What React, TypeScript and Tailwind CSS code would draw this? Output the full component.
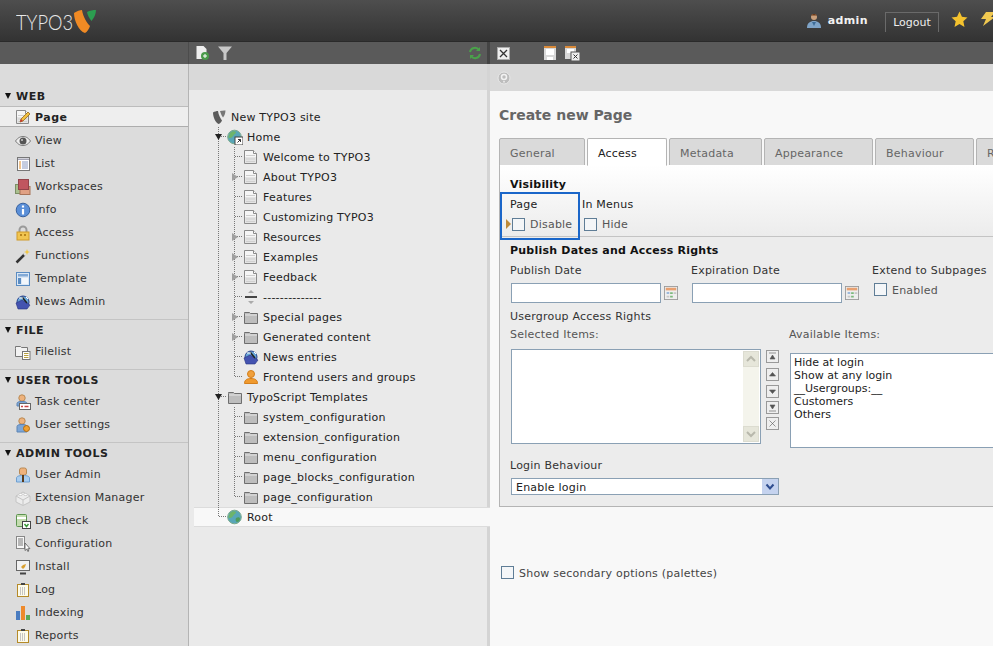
import React from 'react';

const Svg: React.FC<{ size?: number; children: React.ReactNode }> = ({ size = 16, children }) => (
  <svg viewBox="0 0 16 16" width={size} height={size} className="shrink-0">
    {children}
  </svg>
);

const PageShape = () => (
  <>
    <path d="M1.500 1.500h9l3 3v10h-12z" fill="#f6f6f6" stroke="#8a8a8a" />
    <path d="M10.500 1.500v3h3" fill="#fff" stroke="#8a8a8a" />
    <path d="M2 8h11v6H2z" fill="#e4e4e4" />
    <path d="M3 6.500h9M3 10h9M3 12.500h9" stroke="#cfcfcf" />
  </>
);
const FolderIcon = () => (
  <Svg>
    <path d="M1.500 4.500v-1h5l1 1h7v10h-13z" fill="#bdbdbd" stroke="#6e6e6e" />
    <path d="M2 6h12" stroke="#e6e6e6" />
  </Svg>
);
const GlobeIcon = ({ link }: { link?: boolean }) => (
  <Svg>
    <circle cx="7.500" cy="8" r="6.800" fill="#58a6b8" stroke="#7aa98a" />
    <path d="M3 4c2-2 5-2 6-1 0 2-2 2-3 4S3 9 2 9s0-3 1-5z" fill="#6db46a" />
    <path d="M9 9c2-1 4-1 4 1s-2 3-3 3-2-2-1-4z" fill="#4f9c5c" />
    {link && (
      <>
        <rect x="8" y="8" width="8" height="8" fill="#fff" stroke="#444" />
        <path d="M10.500 13.500l3-3M11 10.500h2.500V13" stroke="#333" fill="none" />
      </>
    )}
  </Svg>
);
const Typo3Mark = () => (
  <Svg>
    <path d="M2 3.500c1.500-1 3.500-1.500 5-1.500 .5 4 2.500 7.500 4 9.500C10 13.500 8.500 15 7.500 15 4.500 13.500 2 8 2 3.500z" fill="#5c5c5c" />
    <path d="M9 2c2-.5 4-.8 5.500-.5 0 2.500-1 5-2.500 7C10.500 6.500 9.500 4 9 2z" fill="#777" />
  </Svg>
);
const NewsIcon = () => (
  <Svg>
    <circle cx="8" cy="8" r="6" fill="#6aa8d8" stroke="#27408f" />
    <path d="M1 9l6-3 8 5-3 4H3z" fill="#4453b0" stroke="#27327f" strokeWidth=".6" />
    <path d="M7 3l5 6" stroke="#222" strokeWidth="1.500" />
    <path d="M4 4h4M11 3l2 2" stroke="#fff" />
  </Svg>
);
const UserOrange = () => (
  <Svg>
    <circle cx="8" cy="5" r="3.500" fill="#f0a03c" stroke="#d47f1c" />
    <path d="M1.500 14.500c0-4 3-5 6.500-5s6.500 1 6.500 5z" fill="#f09a2e" stroke="#d47f1c" />
  </Svg>
);
const Divider = () => (
  <Svg>
    <path d="M8 1l3 3H5zM8 15l3-3H5z" fill="#aaa" />
    <path d="M2 8h12" stroke="#444" strokeWidth="2" />
  </Svg>
);
const Clipboard = () => (
  <Svg>
    <rect x="2.500" y="2.500" width="11" height="12" fill="#fdfbea" stroke="#b58a28" />
    <rect x="6" y="1" width="4" height="2" fill="#444" />
    <path d="M5 6h6M5 8h6M5 10h6M5 12h6" stroke="#8f8f9f" strokeDasharray="1 1" />
  </Svg>
);

const sidebarIcons: Record<string, React.ReactNode> = {
  Page: (
    <Svg>
      <PageShape />
      <path d="M5 13l1-3 7-7 2 2-7 7z" fill="#f0c040" stroke="#8a5a10" strokeWidth=".7" />
      <path d="M5 13l1-3 2 2z" fill="#c33" />
    </Svg>
  ),
  View: (
    <Svg>
      <path d="M.5 8C3 4.500 5.500 3.500 8 3.500s5 1 7.500 4.500c-2.500 3.500-5 4.500-7.500 4.500S3 11.500.5 8z" fill="#eee" stroke="#777" />
      <circle cx="8" cy="8" r="3.500" fill="#555" />
      <circle cx="7" cy="7" r="1" fill="#ccc" />
    </Svg>
  ),
  List: (
    <Svg>
      <rect x="2.500" y="1.500" width="12" height="13" fill="#fff" stroke="#777" />
      <path d="M3 2.500h11v1.500H3z" fill="#a5a5b5" />
      <path d="M4 6h2M4 8h2M4 10h2M4 12h2" stroke="#e08a20" />
      <path d="M7 6h6M7 8h6M7 10h6M7 12h6" stroke="#8a9ac0" />
    </Svg>
  ),
  Workspaces: (
    <Svg>
      <rect x=".5" y="5.500" width="10" height="9" fill="#a9bf8e" stroke="#7c8f66" />
      <rect x="5" y="7.500" width="10" height="8" fill="#e0a184" stroke="#a87459" />
      <rect x="3.500" y=".5" width="10" height="10" fill="#c0565f" stroke="#93434a" />
    </Svg>
  ),
  Info: (
    <Svg>
      <circle cx="8" cy="8" r="6.800" fill="#5a8fd8" stroke="#38619e" />
      <path d="M8 3.500v2M8 7v5.500" stroke="#fff" strokeWidth="2.200" />
    </Svg>
  ),
  Access: (
    <Svg>
      <path d="M4.500 7V5a3.500 3.500 0 017 0v2" fill="none" stroke="#9a9a9a" strokeWidth="2" />
      <rect x="2" y="7" width="12" height="8" fill="#f1c550" stroke="#d09a28" />
      <path d="M5 10h2M9 10h2" stroke="#b9851d" strokeWidth="2" />
    </Svg>
  ),
  Functions: (
    <Svg>
      <path d="M1.500 14.500l8-8" stroke="#333" strokeWidth="2.500" />
      <path d="M9 7l1.500-1.500" stroke="#ddd" strokeWidth="2.500" />
      <path d="M12 1l.8 2.200L15 4l-2.200.8L12 7l-.8-2.200L9 4l2.200-.8z" fill="#f3c73e" />
    </Svg>
  ),
  Template: (
    <Svg>
      <rect x="1.500" y="1.500" width="13" height="13" fill="#dbe7f5" stroke="#5a8cc2" />
      <rect x="3" y="3" width="10" height="2.500" fill="#83aad6" />
      <rect x="3" y="7" width="3" height="6" fill="#5a8cc2" />
      <rect x="7" y="7" width="6" height="6" fill="#f3f7fb" />
    </Svg>
  ),
  'News Admin': <NewsIcon />,
  Filelist: (
    <Svg>
      <path d="M.5 4.500v-2h5l1 1h6v9H.5z" fill="#f2f2f2" stroke="#777" />
      <rect x="7.500" y="7.500" width="7.500" height="8" fill="#fff" stroke="#777" />
      <path d="M9 9.500h4.500M9 11.500h4.500M9 13.500h4.500" stroke="#b8a040" />
    </Svg>
  ),
  'Task center': (
    <Svg>
      <circle cx="7" cy="4" r="3.200" fill="#eeb27c" stroke="#b98a55" />
      <path d="M2 12V9.500c0-1.500 2-2 5-2s5 .5 5 2V12z" fill="#7da6d6" stroke="#5c84b4" />
      <rect x="4.500" y="9.500" width="11" height="6" fill="#fff" stroke="#666" />
      <path d="M6 12.500h2M9.500 12.500h4" stroke="#c44" strokeWidth="1.500" />
    </Svg>
  ),
  'User settings': (
    <Svg>
      <circle cx="7" cy="4" r="3.200" fill="#eeb27c" stroke="#b98a55" />
      <path d="M2 15V9.500c0-1.500 2-2 5-2s5 .5 5 2V15z" fill="#7da6d6" stroke="#5c84b4" />
      <circle cx="11.500" cy="11.500" r="3" fill="#f0a030" stroke="#b06a10" />
    </Svg>
  ),
  'User Admin': (
    <Svg>
      <rect x="4.500" y="1" width="7" height="7" rx="2" fill="#efb27c" stroke="#b98a55" />
      <path d="M1.500 15v-4c0-1.500 2-2.500 6.500-2.500s6.500 1 6.500 2.500v4z" fill="#a9cdef" stroke="#6f9fd0" />
      <path d="M8 8v7" stroke="#5a3a1a" strokeWidth="2" />
    </Svg>
  ),
  'Extension Manager': (
    <Svg>
      <path d="M1 6l7-4 7 4v6l-7 3.500L1 12z" fill="#ececec" stroke="#c4c4c4" />
      <path d="M1 6l7 4 7-4M8 10v5" fill="none" stroke="#c4c4c4" />
      <ellipse cx="5.500" cy="4.500" rx="2" ry="1" fill="#fff" stroke="#ccc" />
      <ellipse cx="10.500" cy="4.500" rx="2" ry="1" fill="#fff" stroke="#ccc" />
    </Svg>
  ),
  'DB check': (
    <Svg>
      <rect x="1.500" y="1.500" width="10" height="12" rx="1" fill="#c4dcb0" stroke="#5d9450" />
      <path d="M2 5h9" stroke="#fff" strokeWidth="2" />
      <rect x="7.500" y="8.500" width="8" height="7" fill="#fff" stroke="#444" />
      <path d="M9.500 11l2 2.500 2-2.500" fill="none" stroke="#3a9a3a" strokeWidth="1.500" />
    </Svg>
  ),
  Configuration: (
    <Svg>
      <rect x="1.500" y=".5" width="8" height="12" fill="#f8f8f8" stroke="#888" />
      <path d="M3 3h5M3 5h5M3 7h5M3 9h5" stroke="#777" />
      <path d="M10 7v7.500l1.800-1.500 1 2.500 1-.5-1-2.300H15z" fill="#fff" stroke="#555" strokeWidth=".8" />
    </Svg>
  ),
  Install: (
    <Svg>
      <rect x="1.500" y="1.500" width="13" height="10" fill="#f2f2f2" stroke="#666" />
      <path d="M6 8l2-2 3-1-1 3-2 2z" fill="#d9a030" />
      <path d="M5 14.500h6" stroke="#444" strokeWidth="2" />
    </Svg>
  ),
  Log: <Clipboard />,
  Indexing: (
    <Svg>
      <rect x="1" y="6" width="4" height="9" fill="#4a7cc0" />
      <rect x="6" y="1" width="4" height="14" fill="#ee8a2c" />
      <rect x="11" y="10" width="4" height="5" fill="#5aa858" />
    </Svg>
  ),
  Reports: <Clipboard />,
};

const Module = ({ label }: { label: string }) => (
  <div className="h-[23px] flex items-center pl-[15px] gap-1 text-[#333]">
    {sidebarIcons[label]}
    <span>{label}</span>
  </div>
);

const GroupTitle = ({ label }: { label: string }) => (
  <div className="h-5 flex items-center pl-[5px] gap-[4px] font-bold text-[#222] tracking-[0.5px]">
    <span className="w-0 h-0 border-x-[3.5px] border-x-transparent border-t-[6px] border-t-[#111]" />
    <span className="pt-[2px] ml-px">{label}</span>
  </div>
);

const Group = ({ label, items }: { label: string; items: string[] }) => (
  <div className="border-b border-[#c4c4c4] pb-[6px] last:border-b-0">
    <GroupTitle label={label} />
    {items.map((m) => (
      <Module key={m} label={m} />
    ))}
  </div>
);

const Sidebar = () => (
  <aside className="w-[189px] shrink-0 bg-[#dcdcdc] border-r border-[#b4b4b4] overflow-hidden">
    <div className="pt-[22px] border-b border-[#bcbcbc]">
      <GroupTitle label="WEB" />
    </div>
    <div className="h-5 flex items-center pl-[15px] gap-1 bg-[#eeeeee] border-b border-[#adadad] font-bold text-[#222] tracking-[0.5px]">
      {sidebarIcons.Page}
      <span className="pt-[2px]">Page</span>
    </div>
    <div className="pt-[2px] pb-[6px] border-b border-[#c4c4c4]">
      {['View', 'List', 'Workspaces', 'Info', 'Access', 'Functions', 'Template', 'News Admin'].map((m) => (
        <Module key={m} label={m} />
      ))}
    </div>
    <Group label="FILE" items={['Filelist']} />
    <Group label="USER TOOLS" items={['Task center', 'User settings']} />
    <Group
      label="ADMIN TOOLS"
      items={['User Admin', 'Extension Manager', 'DB check', 'Configuration', 'Install', 'Log', 'Indexing', 'Reports']}
    />
  </aside>
);

type Line = 'tee' | 'end' | 'pipe' | 'none';

const Guide = ({ line, arrow }: { line: Line; arrow?: 'right' | 'down' }) => (
  <svg width="16" height="20" className="shrink-0">
    {line !== 'none' && (
      <path
        d={
          line === 'pipe'
            ? 'M7.500 0V20'
            : line === 'tee'
              ? 'M7.500 0V20M8 9.500H16'
              : 'M7.500 0V9.500H16'
        }
        stroke="#777"
        strokeDasharray="1 1"
        fill="none"
      />
    )}
    {arrow === 'right' && <path d="M5 6l6 4-6 4z" fill="#a0a0a0" />}
    {arrow === 'down' && <path d="M4 7h7l-3.500 6z" fill="#222" />}
  </svg>
);

const Page = () => (
  <Svg>
    <PageShape />
  </Svg>
);

type Node = { label: string; icon: React.ReactNode; lines: Line[]; arrow?: 'right' | 'down' };

const tree: Node[] = [
  { label: 'New TYPO3 site', icon: <Typo3Mark />, lines: [] },
  { label: 'Home', icon: <GlobeIcon link />, lines: ['tee'], arrow: 'down' },
  { label: 'Welcome to TYPO3', icon: <Page />, lines: ['pipe', 'tee'] },
  { label: 'About TYPO3', icon: <Page />, lines: ['pipe', 'tee'], arrow: 'right' },
  { label: 'Features', icon: <Page />, lines: ['pipe', 'tee'] },
  { label: 'Customizing TYPO3', icon: <Page />, lines: ['pipe', 'tee'] },
  { label: 'Resources', icon: <Page />, lines: ['pipe', 'tee'], arrow: 'right' },
  { label: 'Examples', icon: <Page />, lines: ['pipe', 'tee'], arrow: 'right' },
  { label: 'Feedback', icon: <Page />, lines: ['pipe', 'tee'], arrow: 'right' },
  { label: '--------------', icon: <Divider />, lines: ['pipe', 'tee'] },
  { label: 'Special pages', icon: <FolderIcon />, lines: ['pipe', 'tee'], arrow: 'right' },
  { label: 'Generated content', icon: <FolderIcon />, lines: ['pipe', 'tee'], arrow: 'right' },
  { label: 'News entries', icon: <NewsIcon />, lines: ['pipe', 'tee'] },
  { label: 'Frontend users and groups', icon: <UserOrange />, lines: ['pipe', 'end'] },
  { label: 'TypoScript Templates', icon: <FolderIcon />, lines: ['tee'], arrow: 'down' },
  { label: 'system_configuration', icon: <FolderIcon />, lines: ['pipe', 'tee'] },
  { label: 'extension_configuration', icon: <FolderIcon />, lines: ['pipe', 'tee'] },
  { label: 'menu_configuration', icon: <FolderIcon />, lines: ['pipe', 'tee'] },
  { label: 'page_blocks_configuration', icon: <FolderIcon />, lines: ['pipe', 'tee'] },
  { label: 'page_configuration', icon: <FolderIcon />, lines: ['pipe', 'end'] },
];

const TreePanel = () => (
  <section className="w-[298px] shrink-0 bg-[#eaeaea] relative z-10">
    <div className="h-[26px] bg-[#d9d9d9]" />
    <div className="pt-[17px] pl-[22px] text-[#222]">
      {tree.map((n) => (
        <div key={n.label} className="h-5 flex items-center">
          {n.lines.map((l, i) => (
            <Guide key={i} line={l} arrow={i === n.lines.length - 1 ? n.arrow : undefined} />
          ))}
          {n.icon}
          <span className="ml-1 pt-[2px] whitespace-nowrap">{n.label}</span>
        </div>
      ))}
      <div className="h-5 -ml-[17px] flex items-center pl-[17px] bg-[#f8f8f8] border-y border-[#dcdcdc] -mr-[3px]">
        <Guide line="end" />
        <GlobeIcon />
        <span className="ml-1 pt-[2px]">Root</span>
      </div>
    </div>
  </section>
);

const Check = ({ className = '' }: { className?: string }) => (
  <input
    type="checkbox"
    className={`appearance-none w-[13px] h-[13px] shrink-0 border border-[#5f7d96] bg-[#f4f6f8] ${className}`}
  />
);

const CalendarIcon = () => (
  <Svg size={14}>
    <rect x=".5" y=".5" width="15" height="15" fill="#eee" stroke="#999" />
    <rect x="2" y="2" width="12" height="3" fill="#e8a070" />
    <path d="M3 7h3v2H3z" fill="#8fb0d8" />
    <path d="M7 7h3v2H7zM7 11h3v2H7z" fill="#7cb87c" />
    <path d="M11 7h3v2h-3zM3 11h3v2H3z" fill="#c8c8c8" />
  </Svg>
);

const MoveButton = ({ d, className = '' }: { d: string; className?: string }) => (
  <div className={`w-[13px] h-[13px] border border-[#999] bg-[#eee] ${className}`}>
    <svg viewBox="0 0 11 11" width="11" height="11">
      <path d={d} fill="#555" stroke="#555" strokeWidth=".6" />
    </svg>
  </div>
);

const ScrollArrow = ({ d }: { d: string }) => (
  <div className="h-[16px] bg-[#e6e6da] border border-[#dcdcd0] flex items-center justify-center">
    <svg width="10" height="8" viewBox="0 0 10 8">
      <path d={d} fill="none" stroke="#b8b8ac" strokeWidth="2" />
    </svg>
  </div>
);

const tabs = [
  { label: 'General', w: 'w-[86px]' },
  { label: 'Access', w: 'w-[80px]', active: true },
  { label: 'Metadata', w: 'w-[93px]' },
  { label: 'Appearance', w: 'w-[109px]' },
  { label: 'Behaviour', w: 'w-[99px]' },
  { label: 'Resources', w: 'w-[99px]' },
];

const FormPanel = () => (
  <section className="flex-1 min-w-0 bg-[#f8f8f8] border-l-[3px] border-[#d4d4d4] overflow-hidden">
    <div className="h-[27px] bg-[#d9d9d9] pl-[7px] flex items-center">
      <svg width="14" height="14" viewBox="0 0 14 14">
        <circle cx="7" cy="7" r="6" fill="#bdbdbd" stroke="#e8e8e8" />
        <circle cx="7" cy="6" r="2.500" fill="none" stroke="#f2f2f2" strokeWidth="1.500" />
        <path d="M7 10v1.500" stroke="#f2f2f2" strokeWidth="1.500" />
      </svg>
    </div>
    <div className="w-[560px] pl-[9px]">
      <h1 className="pt-[14px] h-[47px] text-[14px] leading-[20px] font-bold tracking-normal text-[#666]">
        Create new Page
      </h1>

      <div className="flex gap-[2px] h-[28px]">
        {tabs.map((t) => (
          <div
            key={t.label}
            className={`${t.w} shrink-0 h-[28px] pl-[10px] pt-[8px] leading-[14px] border border-[#b4b4b4] rounded-t-[2px] ${
              t.active ? 'bg-white border-b-white text-[#222] relative z-10' : 'bg-[#dadada] text-[#666]'
            }`}
          >
            {t.label}
          </div>
        ))}
      </div>

      <div className="border-l border-b border-[#b4b4b4] -mt-px w-[560px]">
        <div className="h-[72px] border-b border-[#c4c4c4] bg-linear-to-b from-white to-[#ececec] pt-[13px] relative">
          <h2 className="pl-[10px] font-bold text-[#111] leading-[14px] h-[14px]">Visibility</h2>
          <div className="flex">
            <div className="w-[80px] h-[48px] border-2 border-[#1a66c9] relative z-10 pl-[8px]">
              <div className="pt-[4px] leading-[14px] text-[#222]">Page</div>
              <div className="mt-[6px] flex items-start text-[#555] leading-[14px] relative">
                <span className="absolute -left-[4px] top-px w-0 h-0 border-y-[5px] border-y-transparent border-l-[5px] border-l-[#bd8a3a]" />
                <Check className="ml-[2px]" />
                <span className="ml-[5px]">Disable</span>
              </div>
            </div>
            <div className="pl-[2px]">
              <div className="pt-[6px] leading-[14px] text-[#222]">In Menus</div>
              <div className="mt-[6px] flex items-start text-[#555] leading-[14px]">
                <Check className="ml-[2px]" />
                <span className="ml-[5px]">Hide</span>
              </div>
            </div>
          </div>
        </div>

        <div className="h-[269px] bg-[#ececec] pl-[10px] pt-[7px] leading-[14px] text-[#333]">
          <h2 className="font-bold text-[#111]">Publish Dates and Access Rights</h2>
          <div className="flex mt-[6px]">
            {['Publish Date', 'Expiration Date'].map((l) => (
              <div key={l} className="w-[181px] shrink-0">
                <div>{l}</div>
                <div className="mt-[5px] flex items-center">
                  <input className="ml-px w-[150px] h-[20px] bg-white border border-[#8aa0b4]" />
                  <span className="ml-[3px]">
                    <CalendarIcon />
                  </span>
                </div>
              </div>
            ))}
            <div>
              <div>Extend to Subpages</div>
              <div className="mt-[5px] flex items-start text-[#555]">
                <Check className="ml-[2px]" />
                <span className="ml-[5px] pt-px">Enabled</span>
              </div>
            </div>
          </div>

          <div className="mt-[7px]">Usergroup Access Rights</div>
          <div className="flex mt-[4px]">
            <div className="w-[279px] shrink-0">
              <div className="text-[#555]">Selected Items:</div>
              <div className="mt-[7px] flex">
                <div className="ml-px w-[250px] h-[95px] bg-white border border-[#8aa0b4] flex justify-end p-px">
                  <div className="w-[16px] bg-[#f4f4ec] flex flex-col justify-between">
                    <ScrollArrow d="M1 6l4-4 4 4" />
                    <ScrollArrow d="M1 2l4 4 4-4" />
                  </div>
                </div>
                <div className="ml-[5px] flex flex-col gap-[3px] pt-px">
                  <MoveButton d="M2 2h7M5.500 4l2.500 4H3z" />
                  <MoveButton d="M5.500 3.500l3 3.500h-6z" className="mt-[2px]" />
                  <MoveButton d="M2.500 4h6l-3 3.500z" className="mt-px" />
                  <MoveButton d="M2 9h7M5.500 7l2.500-4H3z" />
                  <MoveButton d="M2.500 2.500l6 6M8.500 2.500l-6 6" />
                </div>
              </div>
            </div>
            <div className="flex-1">
              <div className="text-[#555]">Available Items:</div>
              <div className="mt-[11px] ml-px h-[95px] bg-white border border-[#8aa0b4] pl-[3px] pt-[2px] leading-[13px] tracking-normal text-[#222]">
                <div>Hide at login</div>
                <div>Show at any login</div>
                <div>__Usergroups:__</div>
                <div>Customers</div>
                <div>Others</div>
              </div>
            </div>
          </div>
          <div className="mt-[11px]">Login Behaviour</div>
          <div className="mt-[5px] ml-px w-[268px] h-[17px] bg-white border border-[#8aa0b4] flex items-center pl-[4px] text-[#222]">
            <span className="flex-1 pt-[2px]">Enable login</span>
            <span className="w-[16px] h-[15px] bg-[#c5d3ef] flex items-center justify-center">
              <svg width="10" height="8" viewBox="0 0 10 8">
                <path d="M1.500 1.500L5 5.500l3.500-4" fill="none" stroke="#2f4d8f" strokeWidth="2" />
              </svg>
            </span>
          </div>
        </div>
      </div>

      <div className="mt-[59px] ml-[2px] flex items-start text-[#444] leading-[14px]">
        <Check />
        <span className="ml-[5px] pt-px">Show secondary options (palettes)</span>
      </div>
    </div>
  </section>
);

const Header = () => (
  <header className="h-[42px] shrink-0 bg-linear-to-b from-[#4e4e4e] to-[#333333] border-b border-[#2a2a2a] flex items-center overflow-hidden">
    <div className="ml-[16px] mt-[3px] w-[55px] text-[22px] leading-[26px] text-[#e8e8e8] tracking-normal whitespace-nowrap origin-left scale-x-[0.83] font-['Lato',sans-serif] font-light">
      TYPO3
    </div>
    <svg width="24" height="24" viewBox="0 0 24 24" className="ml-[3px] shrink-0">
      <path d="M0 4C3 2 6 1 8 1c1 7 5 13 8 16-1 3-3 6-5 7C5 22 0 12 0 4z" fill="#f08a24" />
      <path d="M13 3c3-1.500 6-2 9-2 0 4-2 8-4.500 11C15 9 13.500 6 13 3z" fill="#2c9e50" />
    </svg>
    <div className="flex-1" />
    <svg width="16" height="16" viewBox="0 0 16 16" className="shrink-0">
      <circle cx="8" cy="4" r="3" fill="#caa07c" />
      <path d="M5 2.500c1-2 5-2 6 0z" fill="#6a3a1a" />
      <path d="M1 15c0-5 3-7 7-7s7 2 7 7z" fill="#7fa4c8" />
      <path d="M6 9l2 4 2-4z" fill="#3e6c98" />
    </svg>
    <span className="ml-[6px] font-bold text-[#f2f2f2] tracking-[0.4px]">admin</span>
    <div className="ml-[17px] mt-[2px] w-[54px] h-[20px] shrink-0 border border-b-0 border-[#6a6a6a] text-center leading-[20px] tracking-normal text-[#eee]">
      Logout
    </div>
    <svg width="17" height="17" viewBox="0 0 16 16" className="ml-[12px] -mt-[3px] shrink-0">
      <path d="M8 .5l2.300 5 5.200.6-3.900 3.600 1.100 5.300L8 12.300 3.300 15l1.100-5.300L.5 6.100l5.200-.6z" fill="#f4c22e" />
    </svg>
    <svg width="16" height="16" viewBox="0 0 16 16" className="ml-[12px] -mr-[3px] -mt-[3px] shrink-0">
      <path d="M6 1h9l-4 5h4L3 15l3-7H1z" fill="#f0c850" />
    </svg>
  </header>
);

const Toolbar = () => (
  <div className="h-[22px] shrink-0 bg-[#5a5a5a] flex items-center">
    <div className="w-[189px] h-full border-r border-[#4c4c4c]" />
    <div className="w-[298px] h-full flex items-center pl-[5px]">
      <Svg>
        <path d="M2.500 1h7l3 3v10h-10z" fill="#eee" />
        <circle cx="11" cy="11" r="4" fill="#4a9a4a" />
        <path d="M9 11h4M11 9v4" stroke="#fff" />
      </Svg>
      <span className="ml-[7px]">
        <Svg>
          <path d="M1 1.500h14L9.500 8v7h-3V8z" fill="#c8c8c8" />
        </Svg>
      </span>
      <span className="ml-auto mr-[5px]">
        <svg width="14" height="14" viewBox="0 0 14 14">
          <path d="M2 6a5 5 0 019-2M12 8a5 5 0 01-9 2" fill="none" stroke="#4aa24a" strokeWidth="2" />
          <path d="M12 1v4H8zM2 13V9h4z" fill="#4aa24a" />
        </svg>
      </span>
    </div>
    <div className="w-[3px] h-full bg-[#444]" />
    <div className="flex items-center pl-[7px]">
      <div className="w-[13px] h-[13px] bg-[#eee] border border-[#aaa] flex items-center justify-center">
        <svg width="9" height="9" viewBox="0 0 9 9">
          <path d="M1 1l7 7M8 1l-7 7" stroke="#333" strokeWidth="1.300" />
        </svg>
      </div>
      <span className="ml-[33px]">
        <svg width="14" height="16" viewBox="0 0 14 16">
          <rect x="1" y="1" width="12" height="14" fill="#d8d8d8" />
          <rect x="1" y="1" width="12" height="2" fill="#d98a3a" />
          <rect x="3" y="4" width="8" height="6" fill="#fff" />
          <rect x="4" y="12" width="6" height="3" fill="#fff" />
        </svg>
      </span>
      <span className="ml-[7px]">
        <svg width="16" height="16" viewBox="0 0 16 16">
          <rect x="1" y="1" width="11" height="13" fill="#d8d8d8" />
          <rect x="1" y="1" width="11" height="2" fill="#d98a3a" />
          <rect x="3" y="4" width="7" height="4" fill="#fff" />
          <rect x="7" y="7" width="9" height="9" fill="#eee" stroke="#555" />
          <path d="M9.500 9.500l4 4M13.500 9.500l-4 4" stroke="#333" />
        </svg>
      </span>
    </div>
  </div>
);

export default function App() {
  return (
    <div className="w-[993px] h-[646px] overflow-hidden flex flex-col text-[11px] leading-[14px] tracking-[0.22px] font-['DejaVu_Sans',Verdana,sans-serif]">
      <Header />
      <Toolbar />
      <div className="flex flex-1 min-h-0">
        <Sidebar />
        <TreePanel />
        <FormPanel />
      </div>
    </div>
  );
}
